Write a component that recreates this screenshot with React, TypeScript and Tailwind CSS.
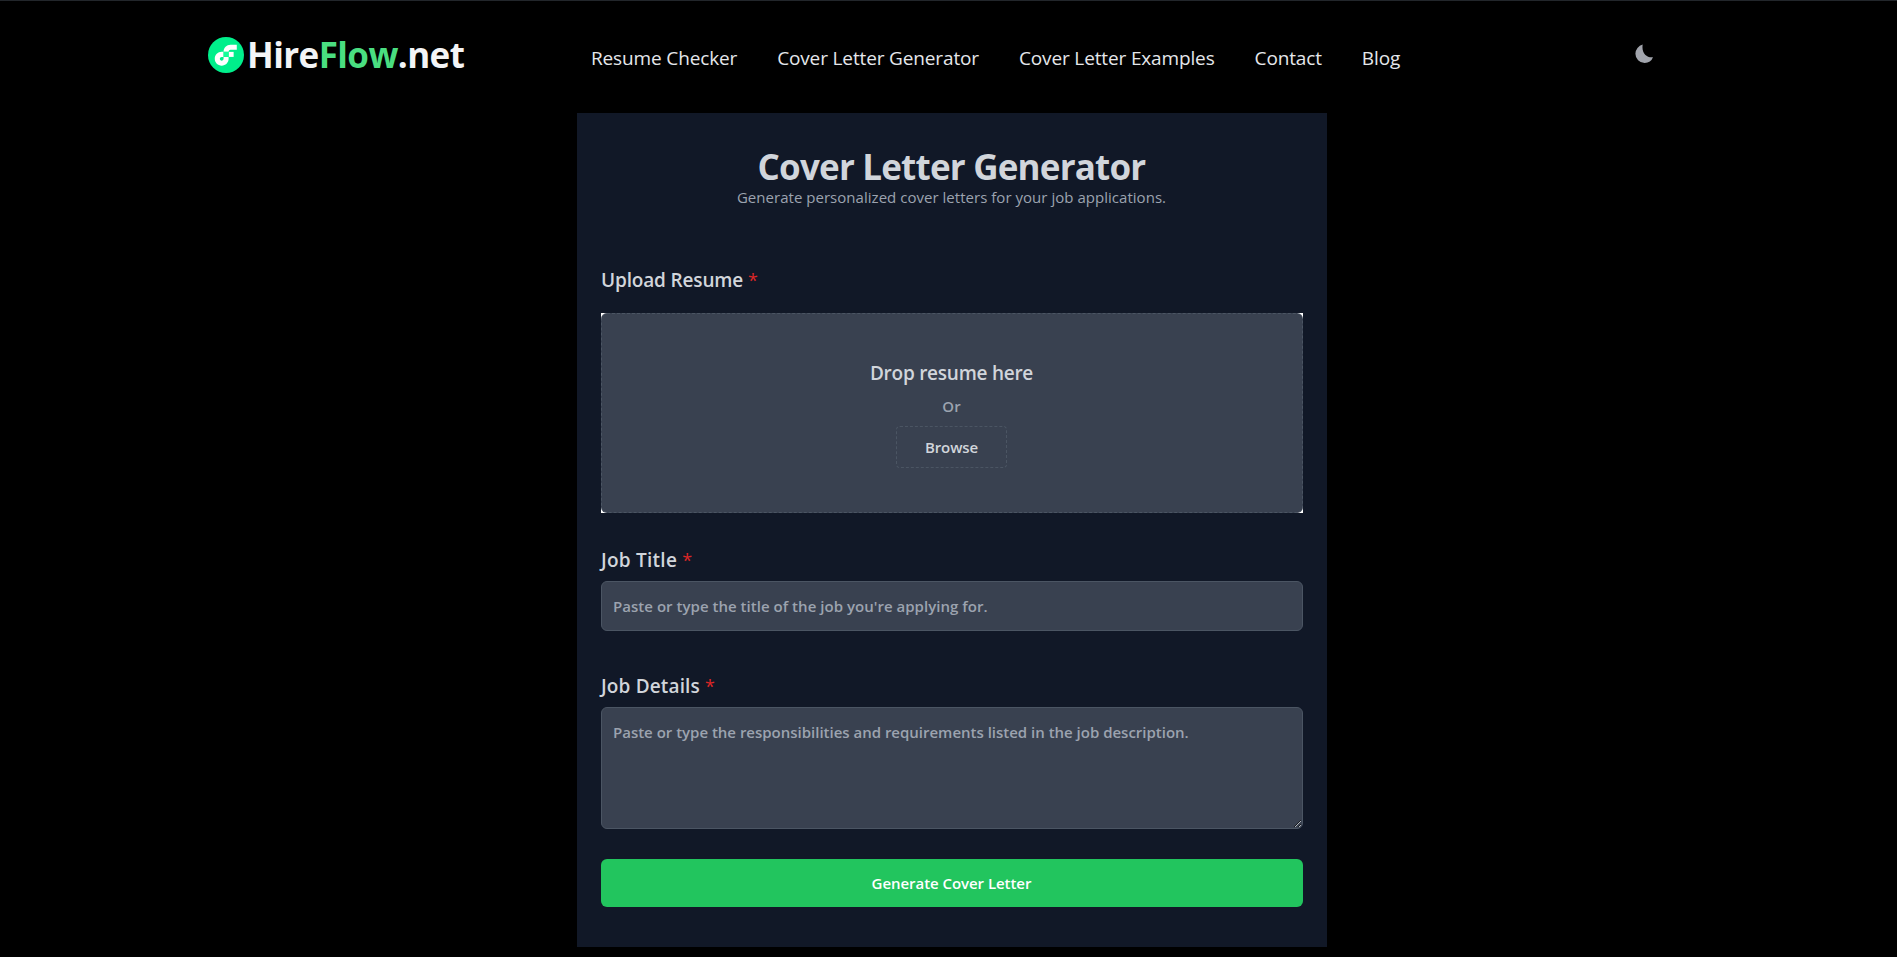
import React from 'react';

interface FieldLabelProps {
    text: string;
    className?: string;
}

const navLinks = [
    { key: 'checker', title: 'Resume Checker' },
    { key: 'generator', title: 'Cover Letter Generator' },
    { key: 'examples', title: 'Cover Letter Examples' },
    { key: 'contact', title: 'Contact' },
    { key: 'blog', title: 'Blog' }
];

const LogoMark: React.FC = () => (
    <svg className="h-9 w-9" viewBox="0 0 101 101">
        <circle cx="50.5" cy="50.5" r="50.5" fill="#00ef8b" />
        <path fill="#fff" d="M57.82 41.73h14.12v14.12H57.82z" />
        <path
            fill="#fff"
            d="M43.71 61.15c0 2.92-2.37 5.3-5.3 5.3s-5.3-2.37-5.3-5.3 2.37-5.3 5.3-5.3h5.3V41.73h-5.3C27.69 41.73 19 50.42 19 61.15s8.69 19.41 19.41 19.41 19.41-8.69 19.41-19.41v-5.3H43.71v5.3Z"
        />
        <path
            fill="#fff"
            d="M63.12 35.56h17.65V21.44H63.12c-10.72 0-19.41 8.69-19.41 19.41v.88h14.11v-.88c0-2.92 2.37-5.29 5.3-5.29Z"
        />
        <path fill="#16ff99" d="M43.71 41.73h14.11v14.12H43.71z" />
    </svg>
);

const FieldLabel: React.FC<FieldLabelProps> = ({ text, className = '' }) => (
    <label className={`block h-7 text-[19px] leading-7 font-semibold text-[#d1d5db] ${className}`}>
        {text} <span className="text-[18px] leading-none font-normal text-[#dc2626]">*</span>
    </label>
);

const Header: React.FC = () => (
    <header className="flex h-[113px] items-start border-t border-[#22262b] pr-[243px] pl-[208px]">
        <a className="flex w-[383px] items-center gap-[3px] pt-[30px] whitespace-nowrap">
            <LogoMark />
            <span className="text-[35px] leading-[48px] font-bold tracking-[-0.6px] text-[#f3f4f6]">
                Hire<span className="text-[#4ade80]">Flow</span>.net
            </span>
        </a>
        <nav className="flex gap-10 pt-[43px] text-[19px] leading-7 tracking-[-0.14px] whitespace-nowrap text-[#e5e7eb]">
            {navLinks.map((l) => (
                <a key={l.key}>{l.title}</a>
            ))}
        </nav>
        <button className="mt-[43px] ml-auto text-[#a1a4ac]">
            <svg className="h-[19px] w-[19px]" viewBox="0 0 19 19" fill="currentColor">
                <path d="M7.7.6A9.5 9.5 0 0 0 .4 9.7A9.3 9.3 0 0 0 9.6 19A9 9 0 0 0 18 13.3C11.5 14 6.3 9 7.7.6Z" />
            </svg>
        </button>
    </header>
);

const App: React.FC = () => {
    return (
        <div className="h-[957px] overflow-hidden bg-black font-['Open_Sans','Noto_Sans',sans-serif]">
            <Header />
            <main className="ml-[577px] h-[834px] w-[750px] bg-[#111827] px-6 pt-9">
                <div className="pr-px text-center whitespace-nowrap">
                    <h1 className="text-[35px] leading-9 font-bold tracking-[-0.8px] text-[#d1d5db]">Cover Letter Generator</h1>
                    <p className="text-[15px] leading-6 tracking-[0.03px] text-[#9ca3af]">
                        Generate personalized cover letters for your job applications.
                    </p>
                </div>

                <FieldLabel text="Upload Resume" className="mt-[57px] tracking-[-0.15px]" />
                <div className="mt-[19px] bg-white">
                    <div className="flex h-[200px] flex-col items-center rounded-md border border-dashed border-[#4b5563] bg-[#394150] pt-[45px] pr-px">
                        <span className="text-[19px] leading-7 font-semibold tracking-[-0.25px] text-[#d1d5db]">Drop resume here</span>
                        <span className="mt-[7px] text-[15px] leading-6 font-semibold text-[#9ca3af]">Or</span>
                        <button className="mt-[8px] h-[42px] w-[111px] rounded border border-dashed border-[#4b5563] text-[15px] font-semibold tracking-[-0.1px] text-[#d1d5db]">
                            Browse
                        </button>
                    </div>
                </div>

                <FieldLabel text="Job Title" className="mt-[33px] tracking-[0.25px]" />
                <input
                    className="mt-[7px] block h-[50px] w-full rounded-md border border-[#4b5563] bg-[#394150] px-[11px] text-[15px] font-semibold tracking-[0.03px] placeholder:text-[#9ca3af]"
                    placeholder="Paste or type the title of the job you're applying for."
                />

                <FieldLabel text="Job Details" className="mt-[41px] tracking-[0.15px]" />
                <textarea
                    className="mt-[7px] block h-[122px] w-full resize rounded-md border border-[#4b5563] bg-[#394150] px-[11px] py-3 text-[15px] leading-6 font-semibold tracking-[-0.01px] placeholder:text-[#9ca3af]"
                    placeholder="Paste or type the responsibilities and requirements listed in the job description."
                />

                <button className="mt-[30px] block h-12 w-full rounded-md bg-[#22c55e] pr-px text-[15px] font-semibold tracking-[-0.05px] text-white">
                    Generate Cover Letter
                </button>
            </main>
        </div>
    );
};

export default App;
